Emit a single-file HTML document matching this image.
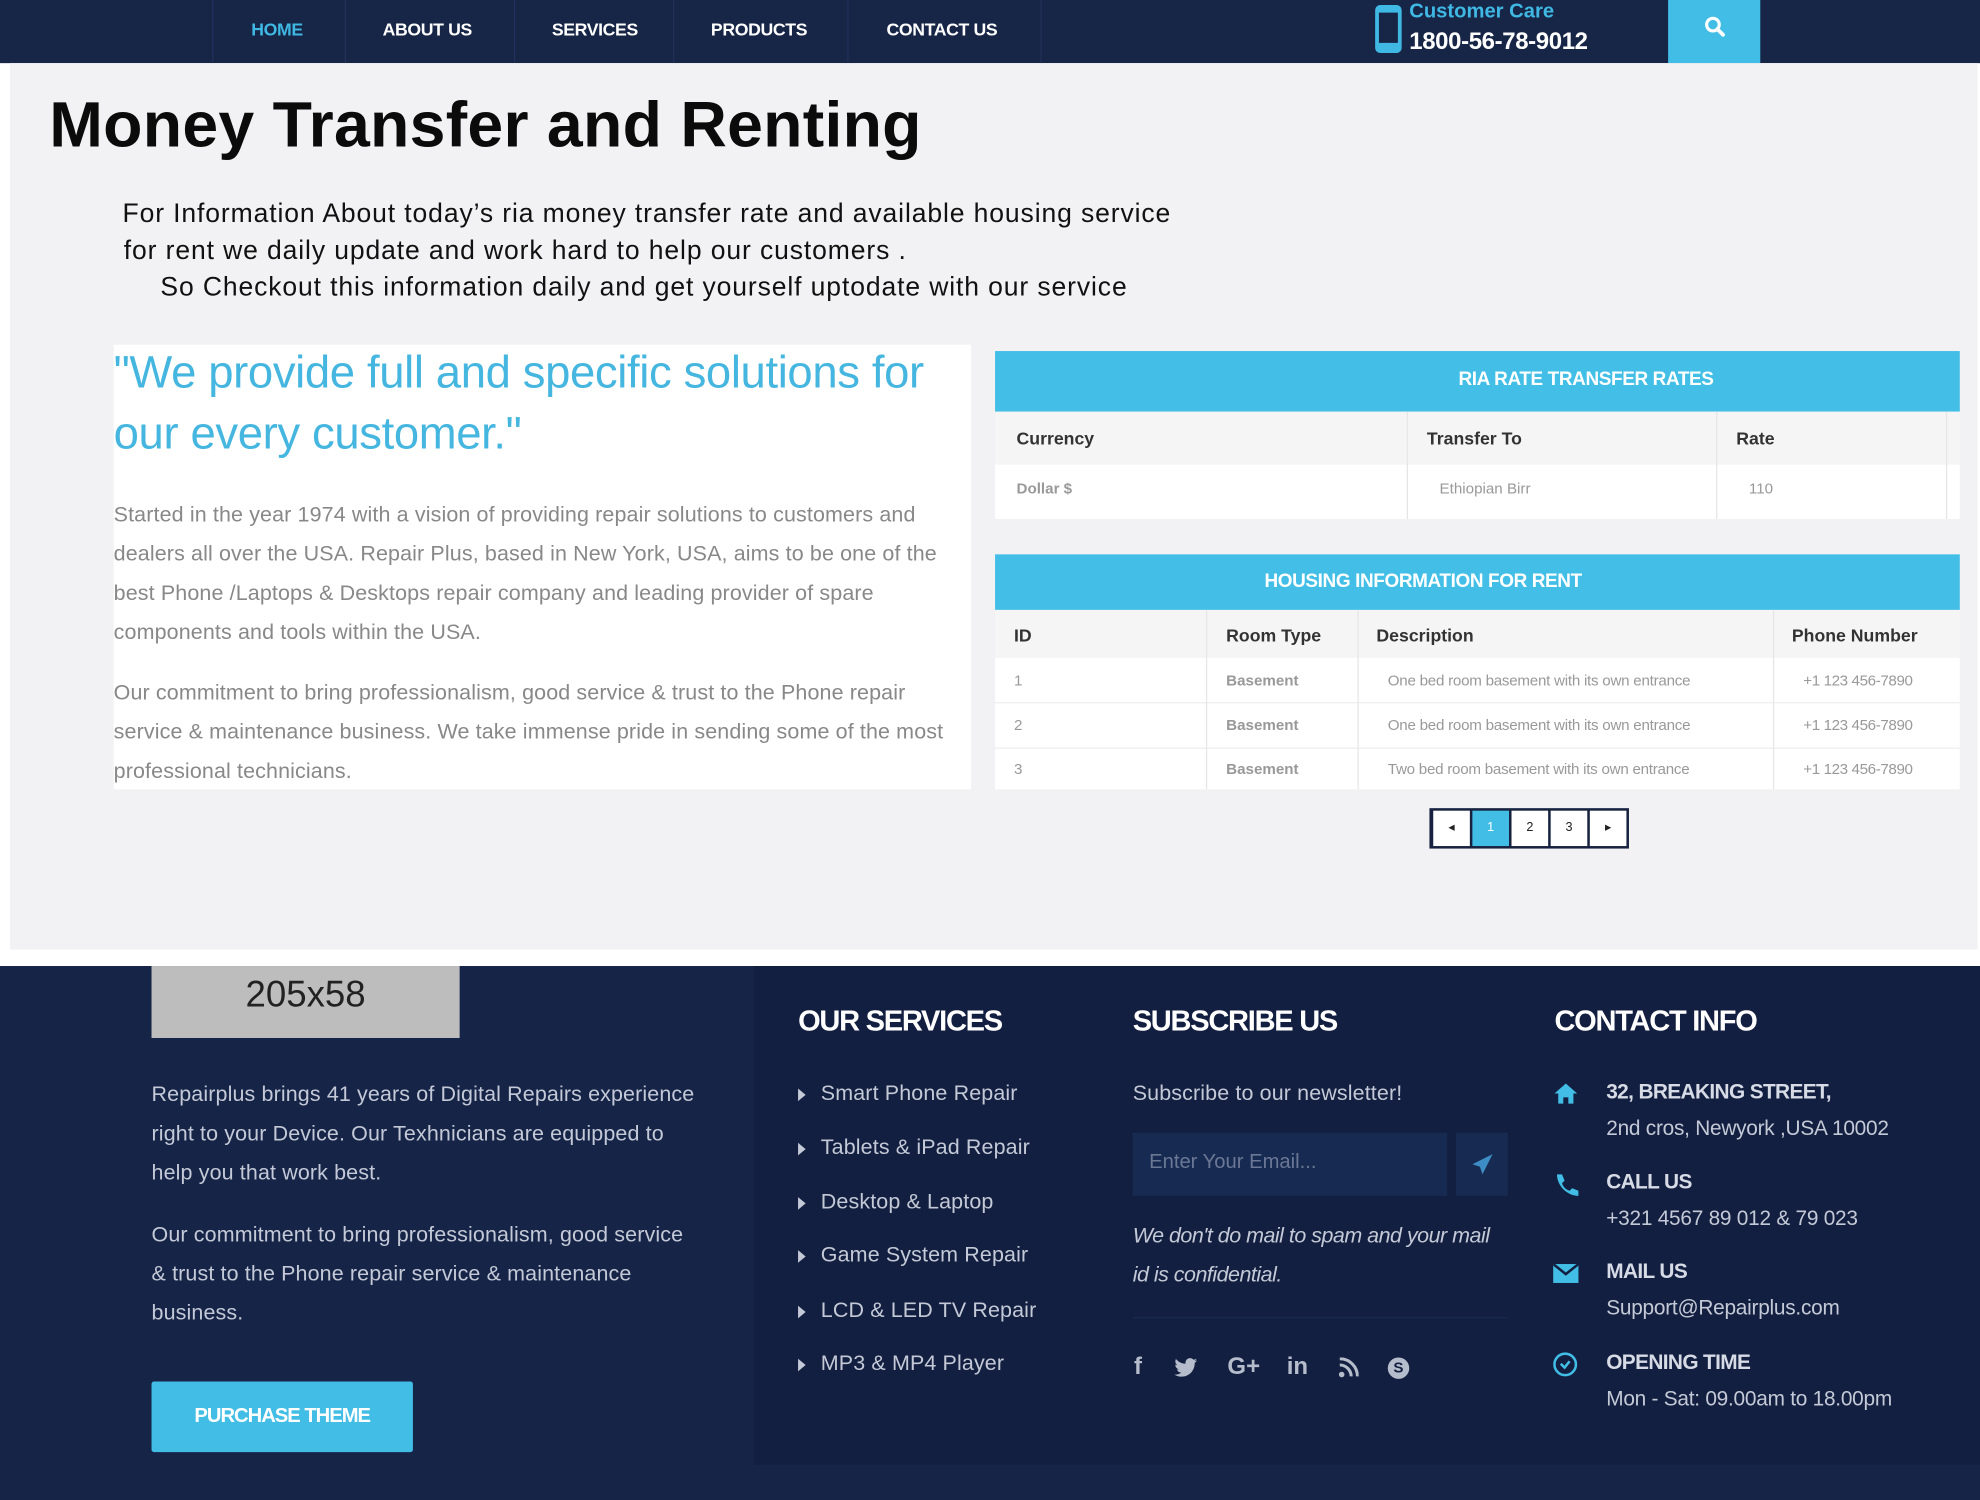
<!DOCTYPE html>
<html><head><meta charset="utf-8"><style>
*{margin:0;padding:0;box-sizing:border-box}
html,body{width:1980px;height:1500px;overflow:hidden;background:#fff;font-family:"Liberation Sans",sans-serif}
#w{position:absolute;left:0;top:0;width:1568px;height:1188px;transform:scale(1.26276);transform-origin:0 0;background:#fff}
.a{position:absolute;white-space:nowrap}
.nav{left:0;top:0;width:1568px;height:50px;background:#172546}
.sep{top:0;width:1px;height:50px;background:#22305a}
.ni{top:15px;font-size:14px;font-weight:bold;color:#fff;letter-spacing:-0.3px}
.main{left:8px;top:50px;width:1558px;height:702px;background:#f2f2f4}
.p{font-size:21px;color:#111;letter-spacing:0.7px}
.gt{font-size:17px;color:#888;letter-spacing:0.1px}
.th{background:#43bfe7;color:#fff;font-weight:bold;font-size:15px;text-align:center;letter-spacing:-0.3px}
.hc{font-size:14px;font-weight:bold;color:#333}
.dc{font-size:12px;color:#999}
.vl{width:1px;background:#e6e6e6}
.foot{left:0;top:765px;width:1568px;height:423px;background:#162448}
.ft{font-size:17px;color:#c3c9d6;letter-spacing:0.1px}
.fh{font-size:23px;font-weight:bold;color:#fff;letter-spacing:-1px}
.tri{width:0;height:0;border-left:6px solid #c3c9d6;border-top:5px solid transparent;border-bottom:5px solid transparent}
.ct{font-size:16.5px;color:#d6dbe6;font-weight:bold;letter-spacing:-0.5px}
.cv{font-size:16.5px;color:#c3c9d6;letter-spacing:-0.2px}
.pg{top:642px;width:29px;height:28px;background:#fff;font-size:10px;text-align:center;line-height:28px;color:#222}
.si{font-size:19px;font-weight:bold;color:#b5bccb}
</style></head><body><div id="w">
<div class="a nav"></div>
<div class="a sep" style="left:168px"></div><div class="a sep" style="left:273px"></div><div class="a sep" style="left:407px"></div><div class="a sep" style="left:533px"></div><div class="a sep" style="left:671px"></div><div class="a sep" style="left:824px"></div>
<div class="a ni" style="left:199px;color:#3fb8e4">HOME</div>
<div class="a ni" style="left:303px">ABOUT US</div>
<div class="a ni" style="left:437px">SERVICES</div>
<div class="a ni" style="left:563px">PRODUCTS</div>
<div class="a ni" style="left:702px">CONTACT US</div>
<div class="a" style="left:1089px;top:4px;width:21px;height:38px;border:3px solid #3fb8e4;border-radius:4px;border-top-width:6px;border-bottom-width:8px"></div>
<div class="a" style="left:1116px;top:1px;font-size:16px;font-weight:bold;color:#3fb8e4">Customer Care</div>
<div class="a" style="left:1116px;top:23px;font-size:19px;font-weight:bold;color:#fff;letter-spacing:-0.3px">1800-56-78-9012</div>
<div class="a" style="left:1321px;top:0;width:73px;height:50px;background:#41bde6"></div>
<svg class="a" style="left:1349px;top:12px" width="18" height="18" viewBox="0 0 18 18"><circle cx="7.5" cy="7.5" r="5" fill="none" stroke="#fff" stroke-width="2.5"/><path d="M11 11l4.5 4.5" stroke="#fff" stroke-width="3" stroke-linecap="round"/></svg>

<div class="a main"></div>
<div class="a" style="left:39px;top:69px;font-size:51px;font-weight:bold;color:#0b0b0b;letter-spacing:0.2px">Money Transfer and Renting</div>
<div class="a p" style="left:97px;top:158px">For Information About today’s ria money transfer rate and available housing service</div>
<div class="a p" style="left:98px;top:187px">for rent we daily update and work hard to help our customers .</div>
<div class="a p" style="left:127px;top:216px">So Checkout this information daily and get yourself uptodate with our service</div>

<div class="a" style="left:90px;top:273px;width:679px;height:352px;background:#fff"></div>
<div class="a" style="left:90px;top:274px;font-size:36px;color:#45b6df;letter-spacing:-0.3px">"We provide full and specific solutions for</div>
<div class="a" style="left:90px;top:322px;font-size:36px;color:#45b6df;letter-spacing:-0.3px">our every customer."</div>
<div class="a gt" style="left:90px;top:398px">Started in the year 1974 with a vision of providing repair solutions to customers and</div>
<div class="a gt" style="left:90px;top:429px">dealers all over the USA. Repair Plus, based in New York, USA, aims to be one of the</div>
<div class="a gt" style="left:90px;top:460px">best Phone /Laptops &amp; Desktops repair company and leading provider of spare</div>
<div class="a gt" style="left:90px;top:491px">components and tools within the USA.</div>
<div class="a gt" style="left:90px;top:539px">Our commitment to bring professionalism, good service &amp; trust to the Phone repair</div>
<div class="a gt" style="left:90px;top:570px">service &amp; maintenance business. We take immense pride in sending some of the most</div>
<div class="a gt" style="left:90px;top:601px">professional technicians.</div>

<div class="a th" style="left:788px;top:278px;width:764px;height:48px;line-height:46px;padding-left:172px">RIA RATE TRANSFER RATES</div>
<div class="a" style="left:788px;top:326px;width:764px;height:42px;background:#f5f5f5"></div>
<div class="a" style="left:788px;top:368px;width:764px;height:43px;background:#fff"></div>
<div class="a vl" style="left:1114px;top:326px;height:85px"></div><div class="a vl" style="left:1359px;top:326px;height:85px"></div><div class="a vl" style="left:1541px;top:326px;height:85px"></div>
<div class="a hc" style="left:805px;top:339px">Currency</div>
<div class="a hc" style="left:1130px;top:339px">Transfer To</div>
<div class="a hc" style="left:1375px;top:339px">Rate</div>
<div class="a dc" style="left:805px;top:380px;font-weight:bold">Dollar $</div>
<div class="a dc" style="left:1140px;top:380px">Ethiopian Birr</div>
<div class="a dc" style="left:1385px;top:380px">110</div>

<div class="a th" style="left:788px;top:439px;width:764px;height:44px;line-height:43px;padding-right:86px">HOUSING INFORMATION FOR RENT</div>
<div class="a" style="left:788px;top:483px;width:764px;height:38px;background:#f5f5f5"></div>
<div class="a" style="left:788px;top:521px;width:764px;height:104px;background:#fff"></div>
<div class="a" style="left:788px;top:556px;width:764px;height:1px;background:#eee"></div>
<div class="a" style="left:788px;top:592px;width:764px;height:1px;background:#eee"></div>
<div class="a vl" style="left:955px;top:483px;height:142px"></div><div class="a vl" style="left:1075px;top:483px;height:142px"></div><div class="a vl" style="left:1404px;top:483px;height:142px"></div>
<div class="a hc" style="left:803px;top:495px">ID</div>
<div class="a hc" style="left:971px;top:495px">Room Type</div>
<div class="a hc" style="left:1090px;top:495px">Description</div>
<div class="a hc" style="left:1419px;top:495px">Phone Number</div>
<div class="a dc" style="left:803px;top:532px">1</div><div class="a dc" style="left:971px;top:532px;font-weight:bold">Basement</div><div class="a dc" style="left:1099px;top:532px;letter-spacing:-0.2px">One bed room basement with its own entrance</div><div class="a dc" style="left:1428px;top:532px;letter-spacing:-0.3px">+1 123 456-7890</div>
<div class="a dc" style="left:803px;top:567px">2</div><div class="a dc" style="left:971px;top:567px;font-weight:bold">Basement</div><div class="a dc" style="left:1099px;top:567px;letter-spacing:-0.2px">One bed room basement with its own entrance</div><div class="a dc" style="left:1428px;top:567px;letter-spacing:-0.3px">+1 123 456-7890</div>
<div class="a dc" style="left:803px;top:602px">3</div><div class="a dc" style="left:971px;top:602px;font-weight:bold">Basement</div><div class="a dc" style="left:1099px;top:602px;letter-spacing:-0.2px">Two bed room basement with its own entrance</div><div class="a dc" style="left:1428px;top:602px;letter-spacing:-0.3px">+1 123 456-7890</div>

<div class="a" style="left:1132px;top:640px;width:158px;height:32px;background:#16223f"></div>
<div class="a pg" style="left:1135px">◂</div>
<div class="a pg" style="left:1166px;background:#41bde6;color:#fff">1</div>
<div class="a pg" style="left:1197px">2</div>
<div class="a pg" style="left:1228px">3</div>
<div class="a pg" style="left:1259px">▸</div>

<div class="a foot"></div>
<div class="a" style="left:597px;top:765px;width:971px;height:395px;background:#131f40"></div>
<div class="a" style="left:120px;top:765px;width:244px;height:57px;background:#bdbdbd;font-size:29px;color:#222;text-align:center;line-height:46px">205x58</div>
<div class="a ft" style="left:120px;top:857px">Repairplus brings 41 years of Digital Repairs experience</div>
<div class="a ft" style="left:120px;top:888px">right to your Device. Our Texhnicians are equipped to</div>
<div class="a ft" style="left:120px;top:919px">help you that work best.</div>
<div class="a ft" style="left:120px;top:968px">Our commitment to bring professionalism, good service</div>
<div class="a ft" style="left:120px;top:999px">&amp; trust to the Phone repair service &amp; maintenance</div>
<div class="a ft" style="left:120px;top:1030px">business.</div>
<div class="a" style="left:120px;top:1094px;width:207px;height:56px;background:#41bde6;border-radius:2px;color:#fff;font-weight:bold;font-size:16px;text-align:center;line-height:56px;letter-spacing:-0.8px">PURCHASE THEME</div>

<div class="a fh" style="left:632px;top:795px">OUR SERVICES</div>
<div class="a fh" style="left:897px;top:795px">SUBSCRIBE US</div>
<div class="a fh" style="left:1231px;top:795px">CONTACT INFO</div>

<div class="a tri" style="left:632px;top:862px"></div><div class="a ft" style="left:650px;top:856px">Smart Phone Repair</div>
<div class="a tri" style="left:632px;top:905px"></div><div class="a ft" style="left:650px;top:899px">Tablets &amp; iPad Repair</div>
<div class="a tri" style="left:632px;top:948px"></div><div class="a ft" style="left:650px;top:942px">Desktop &amp; Laptop</div>
<div class="a tri" style="left:632px;top:990px"></div><div class="a ft" style="left:650px;top:984px">Game System Repair</div>
<div class="a tri" style="left:632px;top:1034px"></div><div class="a ft" style="left:650px;top:1028px">LCD &amp; LED TV Repair</div>
<div class="a tri" style="left:632px;top:1076px"></div><div class="a ft" style="left:650px;top:1070px">MP3 &amp; MP4 Player</div>

<div class="a ft" style="left:897px;top:856px">Subscribe to our newsletter!</div>
<div class="a" style="left:897px;top:897px;width:249px;height:50px;background:#172a52"></div>
<div class="a" style="left:910px;top:912px;font-size:16px;color:#6b7895">Enter Your Email...</div>
<div class="a" style="left:1153px;top:897px;width:41px;height:50px;background:#172a52"></div>
<svg class="a" style="left:1164px;top:912px" width="20" height="20" viewBox="0 0 20 20"><path d="M18 2L2 10l6 2 2 6z" fill="#3d8cc4"/></svg>
<div class="a ft" style="left:897px;top:969px;font-style:italic;letter-spacing:-0.4px">We don't do mail to spam and your mail</div>
<div class="a ft" style="left:897px;top:1000px;font-style:italic;letter-spacing:-0.4px">id is confidential.</div>
<div class="a" style="left:897px;top:1043px;width:297px;height:1px;background:#1b2a4f"></div>
<div class="a si" style="left:898px;top:1072px">f</div>
<svg class="a" style="left:930px;top:1075px" width="18" height="16" viewBox="0 0 24 20"><path d="M24 2.4c-.9.4-1.8.7-2.8.8 1-.6 1.8-1.6 2.2-2.7-1 .6-2 1-3.1 1.2C19.4.7 18.1 0 16.6 0c-2.7 0-4.9 2.2-4.9 4.9 0 .4 0 .8.1 1.1C7.7 5.800 4.1 3.900 1.7.9c-.4.7-.7 1.6-.7 2.5 0 1.7.9 3.2 2.2 4.1-.8 0-1.6-.2-2.2-.6v.1c0 2.4 1.7 4.4 3.9 4.8-.4.1-.8.2-1.3.2-.3 0-.6 0-.9-.1.6 2 2.4 3.4 4.6 3.4-1.7 1.3-3.8 2.1-6.1 2.1H0c2.2 1.4 4.8 2.2 7.5 2.2 9.1 0 14-7.5 14-14v-.6c1-.7 1.8-1.6 2.5-2.5z" fill="#b5bccb"/></svg>
<div class="a si" style="left:972px;top:1072px">G+</div>
<div class="a si" style="left:1019px;top:1072px">in</div>
<svg class="a" style="left:1060px;top:1075px" width="16" height="16" viewBox="0 0 16 16"><circle cx="2.5" cy="13.5" r="2.2" fill="#b5bccb"/><path d="M1 6a9 9 0 0 1 9 9M1 1a14 14 0 0 1 14 14" fill="none" stroke="#b5bccb" stroke-width="2.4"/></svg>
<div class="a" style="left:1099px;top:1075px;width:17px;height:17px;border-radius:50%;background:#b5bccb;color:#131f40;font-size:12px;font-weight:bold;text-align:center;line-height:17px">S</div>

<svg class="a" style="left:1230px;top:857px" width="20" height="18" viewBox="0 0 20 18"><path d="M10 1L1 9h3v8h4v-5h4v5h4V9h3z" fill="#41bde6"/></svg>
<svg class="a" style="left:1230px;top:928px" width="20" height="20" viewBox="0 0 20 20"><path d="M3 2l4 0 2 5-2 2c1 3 3 5 6 6l2-2 5 2v4c-9 0-17-8-17-17z" fill="#41bde6"/></svg>
<div class="a" style="left:1230px;top:1001px;width:20px;height:15px;background:#41bde6"></div>
<svg class="a" style="left:1230px;top:1001px" width="20" height="15"><path d="M0 0l10 8 10-8" fill="none" stroke="#131f40" stroke-width="2"/></svg>
<div class="a" style="left:1230px;top:1071px;width:19px;height:19px;border:2.5px solid #41bde6;border-radius:50%"></div>
<svg class="a" style="left:1230px;top:1071px" width="19" height="19"><path d="M6 9l3 3 4-5" fill="none" stroke="#41bde6" stroke-width="2"/></svg>

<div class="a ct" style="left:1272px;top:856px">32, BREAKING STREET,</div>
<div class="a cv" style="left:1272px;top:885px">2nd cros, Newyork ,USA 10002</div>
<div class="a ct" style="left:1272px;top:927px">CALL US</div>
<div class="a cv" style="left:1272px;top:956px">+321 4567 89 012 &amp; 79 023</div>
<div class="a ct" style="left:1272px;top:998px">MAIL US</div>
<div class="a cv" style="left:1272px;top:1027px">Support@Repairplus.com</div>
<div class="a ct" style="left:1272px;top:1070px">OPENING TIME</div>
<div class="a cv" style="left:1272px;top:1099px">Mon - Sat: 09.00am to 18.00pm</div>
</div></body></html>
